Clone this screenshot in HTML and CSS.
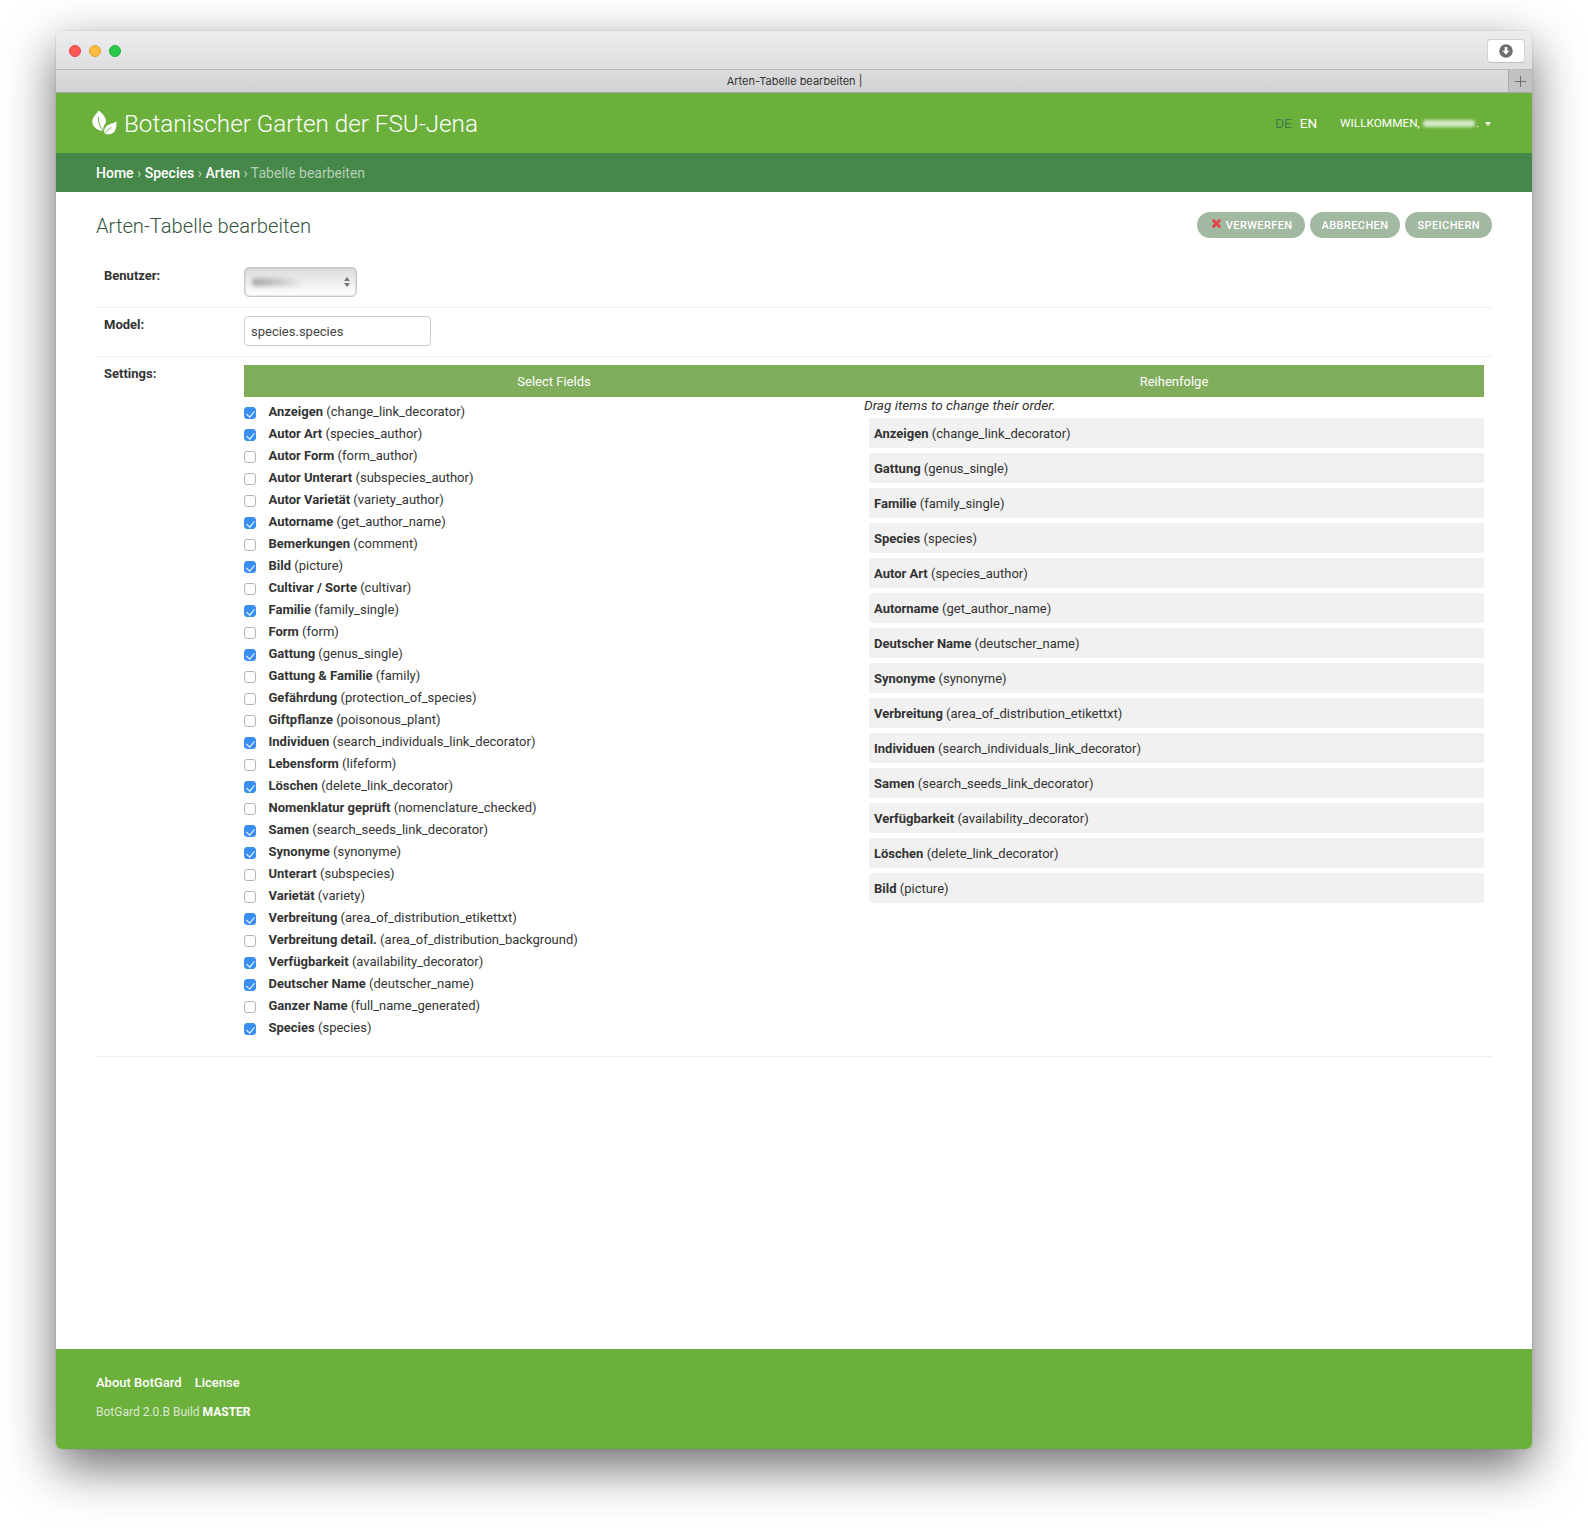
FILE: index.html
```html
<!DOCTYPE html>
<html lang="de">
<head>
<meta charset="utf-8">
<title>Arten-Tabelle bearbeiten</title>
<link rel="stylesheet" href="styles.css">
</head>
<body>
<div class="window">
  <div class="titlebar">
    <div class="lights"><i class="light red"></i><i class="light amber"></i><i class="light green"></i></div>
    <div class="dl-btn"><svg width="14" height="14" viewBox="0 0 14 14"><circle cx="7" cy="7" r="6.8" fill="#6e6e6e"/><path d="M5.700 3h2.600v3.800h2.200L7 10.800 3.500 6.800h2.200z" fill="#fff"/></svg></div>
  </div>
  <div class="tabbar">
    <div class="tab-title">Arten-Tabelle bearbeiten |</div>
    <div class="tab-add"><svg width="11" height="11" viewBox="0 0 11 11"><path d="M5.500 0v11M0 5.500h11" stroke="#6f6f6f" stroke-width="1" fill="none"/></svg></div>
  </div>
  <header class="site-header">
    <div class="brand">
      <svg class="logo" width="25" height="25" viewBox="0 0 25 25"><path d="M6.500 .5C9.500 2.500 13 6 13.800 9.500c.4 2-.2 3.700-1 5C11.600 16 11 18 11.300 21 6 20.800 1 17.500.4 12.500.1 8.500 2.500 5.500 4.500 3.500 5.300 2.700 6 1.600 6.500 .5z" fill="#fff"/><path d="M6.500 7c-.5 4 .8 9 4.800 14" stroke="#6cb03c" stroke-width="1" fill="none"/><path d="M24.500 11.500c.2 2.300-.1 5.500-1 8-1 3-4 5-8.500 4.700-1.300-.1-2-.4-2.700-.9-.5-2.500.2-5.500 2.500-7.500 2.500-2.200 6.500-2.400 9.700-4.300z" fill="#fff"/><path d="M12.500 23.500c2-2.500 4-4.500 7-6" stroke="#6cb03c" stroke-width="1" fill="none"/></svg>
      <span class="brand-name">Botanischer Garten der FSU-Jena</span>
    </div>
    <div class="user-tools">
      <span class="lang lang-active">DE</span>
      <span class="lang">EN</span>
      <span class="welcome">WILLKOMMEN,<span class="blur-name"></span>.</span>
      <span class="caret"></span>
    </div>
  </header>
  <nav class="breadcrumbs"><a>Home</a> <span class="sep">›</span> <a>Species</a> <span class="sep">›</span> <a>Arten</a> <span class="sep">›</span> <span class="current">Tabelle bearbeiten</span></nav>
  <main class="content">
    <div class="page-head">
      <h1>Arten-Tabelle bearbeiten</h1>
      <div class="actions">
        <button class="pill"><svg width="11" height="11" viewBox="0 0 11 11"><path d="M1.800 1.800l7.400 7.400M9.200 1.800l-7.400 7.400" stroke="#e0474c" stroke-width="3" fill="none"/></svg>VERWERFEN</button>
        <button class="pill">ABBRECHEN</button>
        <button class="pill">SPEICHERN</button>
      </div>
    </div>
    <div class="form-row row-user">
      <label class="field-label">Benutzer:</label>
      <div class="fake-select"><span class="blur-value"></span><span class="updown"><i class="up"></i><i class="down"></i></span></div>
    </div>
    <div class="form-row row-model">
      <label class="field-label">Model:</label>
      <input class="text-input" type="text" value="species.species">
    </div>
    <div class="form-row row-settings">
      <label class="field-label">Settings:</label>
      <div class="settings">
        <div class="settings-head"><div>Select Fields</div><div>Reihenfolge</div></div>
        <div class="settings-body">
          <ul class="field-list">
            <li><input type="checkbox" checked><span><b>Anzeigen</b> (change_link_decorator)</span></li>
            <li><input type="checkbox" checked><span><b>Autor Art</b> (species_author)</span></li>
            <li><input type="checkbox"><span><b>Autor Form</b> (form_author)</span></li>
            <li><input type="checkbox"><span><b>Autor Unterart</b> (subspecies_author)</span></li>
            <li><input type="checkbox"><span><b>Autor Varietät</b> (variety_author)</span></li>
            <li><input type="checkbox" checked><span><b>Autorname</b> (get_author_name)</span></li>
            <li><input type="checkbox"><span><b>Bemerkungen</b> (comment)</span></li>
            <li><input type="checkbox" checked><span><b>Bild</b> (picture)</span></li>
            <li><input type="checkbox"><span><b>Cultivar / Sorte</b> (cultivar)</span></li>
            <li><input type="checkbox" checked><span><b>Familie</b> (family_single)</span></li>
            <li><input type="checkbox"><span><b>Form</b> (form)</span></li>
            <li><input type="checkbox" checked><span><b>Gattung</b> (genus_single)</span></li>
            <li><input type="checkbox"><span><b>Gattung &amp; Familie</b> (family)</span></li>
            <li><input type="checkbox"><span><b>Gefährdung</b> (protection_of_species)</span></li>
            <li><input type="checkbox"><span><b>Giftpflanze</b> (poisonous_plant)</span></li>
            <li><input type="checkbox" checked><span><b>Individuen</b> (search_individuals_link_decorator)</span></li>
            <li><input type="checkbox"><span><b>Lebensform</b> (lifeform)</span></li>
            <li><input type="checkbox" checked><span><b>Löschen</b> (delete_link_decorator)</span></li>
            <li><input type="checkbox"><span><b>Nomenklatur geprüft</b> (nomenclature_checked)</span></li>
            <li><input type="checkbox" checked><span><b>Samen</b> (search_seeds_link_decorator)</span></li>
            <li><input type="checkbox" checked><span><b>Synonyme</b> (synonyme)</span></li>
            <li><input type="checkbox"><span><b>Unterart</b> (subspecies)</span></li>
            <li><input type="checkbox"><span><b>Varietät</b> (variety)</span></li>
            <li><input type="checkbox" checked><span><b>Verbreitung</b> (area_of_distribution_etikettxt)</span></li>
            <li><input type="checkbox"><span><b>Verbreitung detail.</b> (area_of_distribution_background)</span></li>
            <li><input type="checkbox" checked><span><b>Verfügbarkeit</b> (availability_decorator)</span></li>
            <li><input type="checkbox" checked><span><b>Deutscher Name</b> (deutscher_name)</span></li>
            <li><input type="checkbox"><span><b>Ganzer Name</b> (full_name_generated)</span></li>
            <li><input type="checkbox" checked><span><b>Species</b> (species)</span></li>
          </ul>
          <div class="order">
            <div class="order-hint">Drag items to change their order.</div>
            <ul class="order-list">
              <li><b>Anzeigen</b> (change_link_decorator)</li>
              <li><b>Gattung</b> (genus_single)</li>
              <li><b>Familie</b> (family_single)</li>
              <li><b>Species</b> (species)</li>
              <li><b>Autor Art</b> (species_author)</li>
              <li><b>Autorname</b> (get_author_name)</li>
              <li><b>Deutscher Name</b> (deutscher_name)</li>
              <li><b>Synonyme</b> (synonyme)</li>
              <li><b>Verbreitung</b> (area_of_distribution_etikettxt)</li>
              <li><b>Individuen</b> (search_individuals_link_decorator)</li>
              <li><b>Samen</b> (search_seeds_link_decorator)</li>
              <li><b>Verfügbarkeit</b> (availability_decorator)</li>
              <li><b>Löschen</b> (delete_link_decorator)</li>
              <li><b>Bild</b> (picture)</li>
            </ul>
          </div>
        </div>
      </div>
    </div>
  </main>
  <footer class="site-footer">
    <div class="footer-links"><a>About BotGard</a><a>License</a></div>
    <div class="build">BotGard 2.0.B Build <b>MASTER</b></div>
  </footer>
</div>
</body>
</html>
```
FILE: styles.css
```css
* { box-sizing: border-box; }
html, body { margin: 0; padding: 0; }
body {
  width: 1588px;
  height: 1529px;
  padding: 31px 56px 80px;
  background: #fff;
  font-family: Roboto, "Liberation Sans", sans-serif;
  font-size: 13px;
  color: #333;
  overflow: hidden;
}
ul { list-style: none; margin: 0; padding: 0; }
b { font-weight: 700; }

.window {
  height: 1418px;
  display: flex;
  flex-direction: column;
  border-radius: 6px;
  overflow: hidden;
  background: #fff;
  box-shadow: 0 18px 50px 0 rgba(0,0,0,.58), 0 0 0 1px rgba(0,0,0,.06);
}
.titlebar {
  height: 39px;
  flex: none;
  display: flex;
  align-items: center;
  justify-content: space-between;
  padding: 1px 7px 0 13px;
  background: linear-gradient(#ededef, #dedee0);
  border-bottom: 1px solid #b9b9bb;
}
.lights { display: flex; gap: 8px; }
.light { width: 12px; height: 12px; border-radius: 50%; display: block; }
.light.red { background: #fc5753; border: 1px solid #df4744; }
.light.amber { background: #fdbc40; border: 1px solid #de9f34; }
.light.green { background: #2ac94a; border: 1px solid #1fb53a; }
.dl-btn {
  width: 38px;
  height: 24px;
  display: flex;
  align-items: center;
  justify-content: center;
  background: #fff;
  border: 1px solid #d2d2d4;
  border-bottom-color: #bdbdbf;
  border-radius: 4px;
}
.tabbar {
  height: 23px;
  flex: none;
  display: flex;
  background: linear-gradient(#dcdcde, #d3d3d5);
  border-bottom: 1px solid #a9a9ab;
}
.tab-title {
  flex: 1;
  padding-left: 25px;
  text-align: center;
  font-size: 11px;
  line-height: 22px;
  color: #333;
  font-family: Inter, "Liberation Sans", sans-serif;
}
.tab-add {
  width: 24px;
  display: flex;
  align-items: center;
  justify-content: center;
  background: #c2c2c4;
  border-left: 1px solid #ababad;
}

.site-header {
  height: 60px;
  flex: none;
  display: flex;
  align-items: center;
  justify-content: space-between;
  padding: 0 40px 0 36px;
  background: #6cb03c;
  color: #fff;
}
.brand { display: flex; align-items: center; gap: 7px; }
.logo { display: block; margin-top: -1px; }
.brand-name { font-size: 24.250px; font-weight: 300; padding-top: 1px; }
.user-tools { display: flex; align-items: center; font-size: 11.800px; }
.lang { font-size: 13.500px; font-weight: 400; margin-right: 8px; }
.lang-active { color: #3d7c49; }
.welcome { margin-left: 15px; display: flex; align-items: center; font-weight: 400; }
.blur-name {
  width: 52px;
  height: 7px;
  margin: 0 1px 0 3px;
  background: #d4e9c6;
  border-radius: 3px;
  filter: blur(1.500px);
}
.caret {
  width: 0;
  height: 0;
  margin: 2px 1px 0 6px;
  border-left: 3.500px solid transparent;
  border-right: 3.500px solid transparent;
  border-top: 4px solid #fff;
}
.breadcrumbs {
  height: 39px;
  flex: none;
  padding-left: 40px;
  background: #46884a;
  color: #b9d2ba;
  font-size: 14px;
  line-height: 40px;
}
.breadcrumbs a { color: #fff; font-weight: 500; }
.breadcrumbs .current { color: #b5cfb7; }

.content { flex: 1; padding: 0 40px; }
.page-head {
  display: flex;
  justify-content: space-between;
  align-items: flex-start;
  padding-top: 20px;
  height: 67px;
}
h1 {
  margin: 0;
  font-size: 20.200px;
  line-height: 28px;
  font-weight: 300;
  color: #35543c;
}
.actions { display: flex; gap: 5px; }
.pill {
  height: 26px;
  padding: 0 12px;
  border: 0;
  border-radius: 13px;
  background: #a1b8a1;
  color: #fff;
  font-family: Roboto, "Liberation Sans", sans-serif;
  font-size: 11px;
  font-weight: 500;
  letter-spacing: .4px;
  display: flex;
  align-items: center;
  gap: 4px;
}
.pill svg { margin: -3px 0 0 2px; }

.form-row {
  display: flex;
  padding: 8px;
  border-bottom: 1px solid #eee;
}
.field-label {
  width: 140px;
  flex: none;
  font-weight: 700;
  color: #333;
  line-height: 18px;
}
.row-user { height: 49px; }
.row-model { height: 49px; }
.fake-select {
  width: 113px;
  height: 30px;
  display: flex;
  align-items: center;
  justify-content: space-between;
  padding: 0 6px 0 7px;
  background: linear-gradient(#dcdcdc, #fff);
  border: 1px solid #c8c8c8;
  border-radius: 5px;
  box-shadow: inset 0 0 2px #b0b0b0;
}
.blur-value {
  width: 48px;
  height: 8px;
  background: linear-gradient(90deg, #a6a6a6, #c4c4c4 50%, #e6e6e6);
  border-radius: 4px;
  filter: blur(2px);
}
.updown { display: flex; flex-direction: column; gap: 2px; }
.updown i { width: 0; height: 0; border-left: 3px solid transparent; border-right: 3px solid transparent; display: block; }
.updown .up { border-bottom: 4px solid #777; }
.updown .down { border-top: 4px solid #777; }
.text-input {
  width: 187px;
  height: 30px;
  padding: 0 6px;
  border: 1px solid #ccc;
  border-radius: 4px;
  font: 13px Roboto, "Liberation Sans", sans-serif;
  color: #444;
  background: #fff;
}
.row-settings { padding-bottom: 18px; }
.settings { width: 1240px; }
.settings-head {
  display: grid;
  grid-template-columns: 620px 620px;
  height: 32px;
  background: #80ad5c;
  color: #fff;
  text-align: center;
  font-size: 13px;
  font-weight: 400;
  line-height: 33px;
}
.settings-body { display: grid; grid-template-columns: 620px 620px; }
.field-list { padding-top: 3px; }
.field-list li { display: flex; align-items: center; height: 22px; }
.field-list input {
  appearance: none;
  width: 12px;
  height: 12px;
  margin: 3px 12.500px 0 0;
  flex: none;
  position: relative;
  background: #fff;
  border: 1px solid #b4b4b4;
  border-radius: 3px;
}
.field-list input:checked {
  background: #3b8ff0;
  border-color: #3b8ff0;
}
.field-list input:checked::after {
  content: "";
  position: absolute;
  left: 3px;
  top: 1px;
  width: 4px;
  height: 7px;
  border: solid #fff;
  border-width: 0 1.500px 1.500px 0;
  transform: rotate(40deg);
}
.order-hint {
  height: 21px;
  font-size: 13.600px;
  font-style: italic;
  line-height: 16px;
}
.order-list { margin-left: 5px; display: flex; flex-direction: column; gap: 5px; }
.order-list li {
  height: 30px;
  padding-left: 5px;
  background: #f1f1f1;
  line-height: 31px;
}

.site-footer {
  height: 100px;
  flex: none;
  padding: 25px 40px 0;
  background: #6cb03c;
  color: #dbe8d2;
}
.footer-links { display: flex; gap: 13px; font-size: 13px; font-weight: 500; color: #fff; line-height: 18px; }
.build { margin-top: 11px; font-size: 12px; line-height: 18px; }
.build b { color: #fff; }
```
